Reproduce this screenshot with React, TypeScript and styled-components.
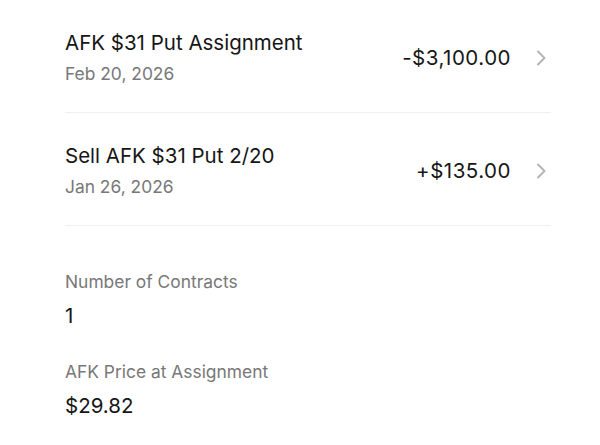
import React from "react";
import styled, { createGlobalStyle } from "styled-components";

const Global = createGlobalStyle`
  html, body { margin: 0; padding: 0; background: #ffffff; }
  body { font-family: Inter, "Noto Sans", sans-serif; -webkit-font-smoothing: antialiased; }
`;

const Page = styled.div`
  width: 600px;
  height: 445px;
  box-sizing: border-box;
  padding: 0 49px 0 65px;
  background: #fff;
  overflow: hidden;
`;

const Row = styled.div`
  display: flex;
  align-items: center;
  height: 113px;
  box-sizing: border-box;
  padding-top: 4px;
  border-bottom: 1px solid #efefef;
`;

const RowText = styled.div`
  flex: 1;
  display: flex;
  flex-direction: column;
  gap: 8px;
`;

const Title = styled.div`
  font-size: 20.5px;
  line-height: 24px;
  color: #161616;
`;

const Sub = styled.div`
  font-size: 17.4px;
  line-height: 22px;
  color: #787878;
`;

const Amount = styled.div`
  font-size: 20.5px;
  line-height: 24px;
  letter-spacing: 0.5px;
  color: #161616;
  margin-right: 24px;
`;

const Chevron = styled.svg`
  width: 12px;
  height: 16px;
  margin-right: 4px;
`;

const Details = styled.div`
  display: flex;
  flex-direction: column;
  padding-top: 45px;
  gap: 33px;
`;

const Field = styled.div`
  display: flex;
  flex-direction: column;
  gap: 11px;
`;

const Value = styled.div`
  font-size: 20.5px;
  line-height: 24px;
  color: #161616;
`;

const rows = [
  { title: "AFK $31 Put Assignment", date: "Feb 20, 2026", amount: "-$3,100.00" },
  { title: "Sell AFK $31 Put 2/20", date: "Jan 26, 2026", amount: "+$135.00" },
];

const fields = [
  { label: "Number of Contracts", value: "1" },
  { label: "AFK Price at Assignment", value: "$29.82" },
];

export default function App() {
  return (
    <>
      <Global />
      <Page>
        {rows.map((r) => (
          <Row key={r.title}>
            <RowText>
              <Title>{r.title}</Title>
              <Sub>{r.date}</Sub>
            </RowText>
            <Amount>{r.amount}</Amount>
            <Chevron viewBox="0 0 12 16" fill="none">
              <path d="M3 1.5 L9.5 8 L3 14.5" stroke="#b4b4b4" strokeWidth="2" strokeLinecap="round" strokeLinejoin="round" />
            </Chevron>
          </Row>
        ))}
        <Details>
          {fields.map((f) => (
            <Field key={f.label}>
              <Sub>{f.label}</Sub>
              <Value>{f.value}</Value>
            </Field>
          ))}
        </Details>
      </Page>
    </>
  );
}
